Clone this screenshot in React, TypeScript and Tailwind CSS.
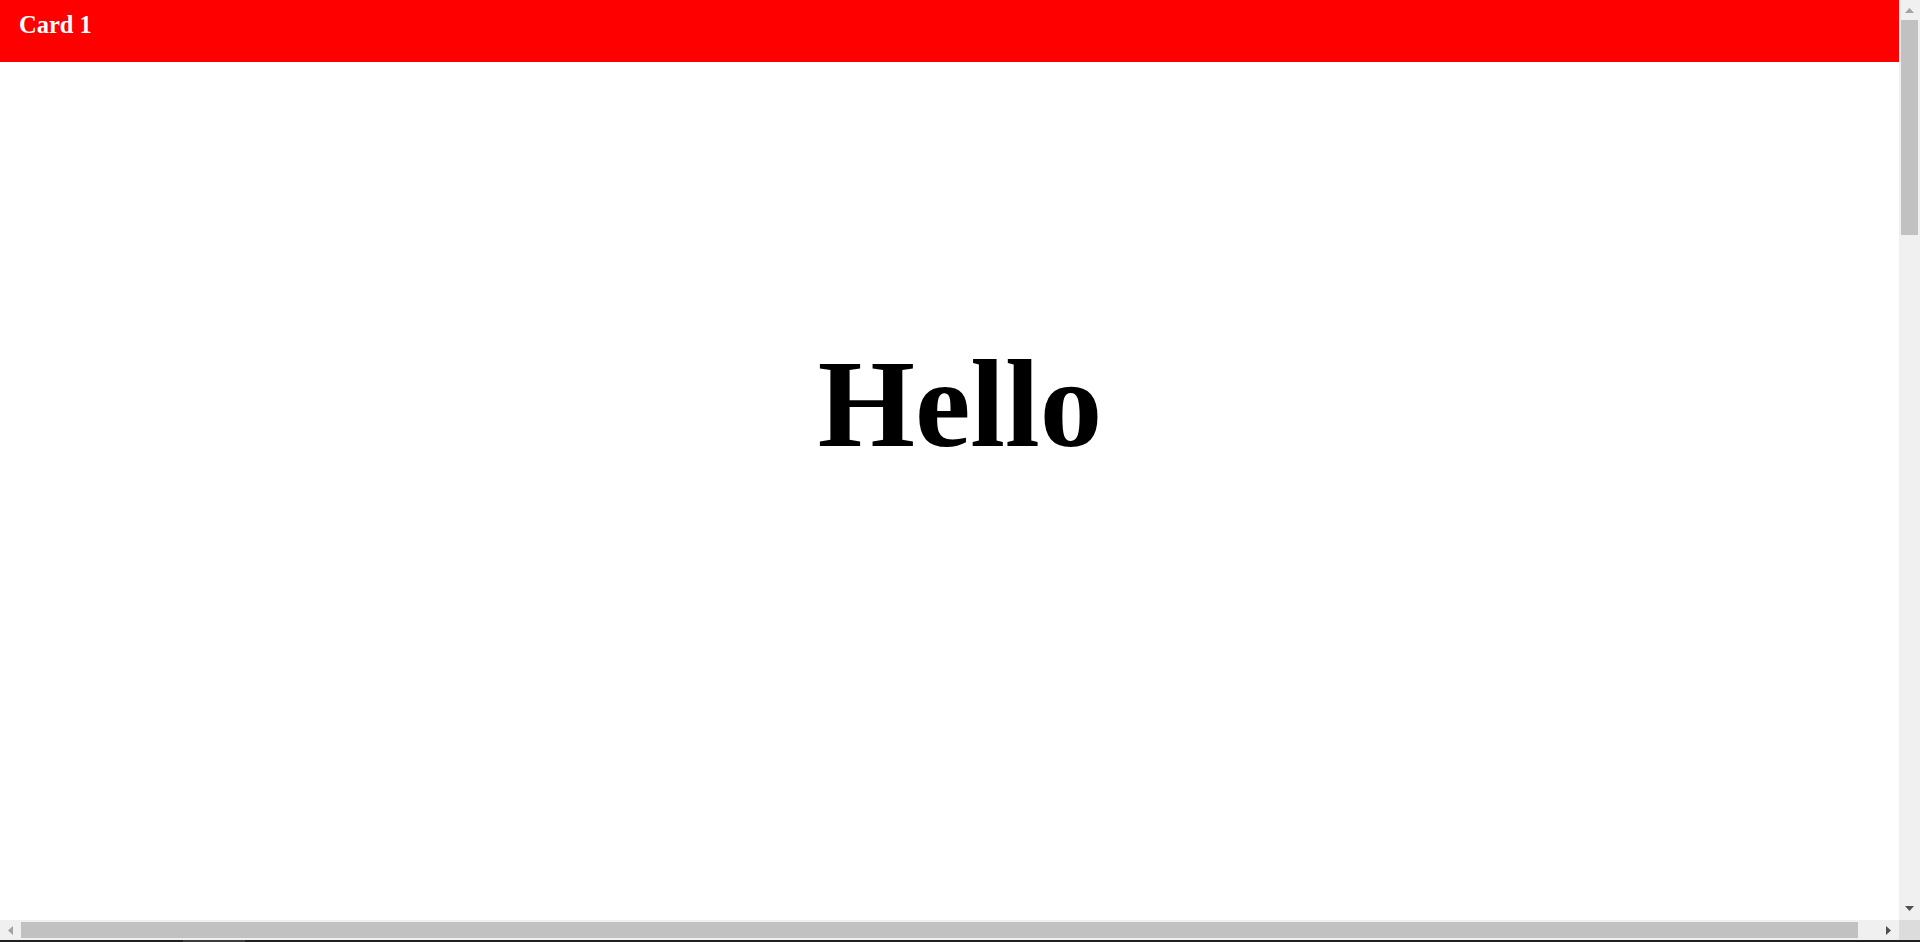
function Card({ n }: { n: number }) {
  return (
    <section className="flex h-[958px] w-[1920px] shrink-0 flex-col bg-white">
      <header className="h-[62px] shrink-0 bg-[#ff0000] pl-[19px] pt-[13px]">
        <h2 className="text-[24.5px] font-bold leading-none text-white">Card {n}</h2>
      </header>
      <div className="flex justify-center pt-[280px]">
        <h1 className="text-[125px] font-bold leading-none text-black">Hello</h1>
      </div>
    </section>
  );
}

function Arrow({ dir, color }: { dir: 'up' | 'down' | 'left' | 'right'; color: string }) {
  const pts = {
    up: '0,5 4.5,0 9,5',
    down: '0,0 9,0 4.5,5',
    left: '5,0 5,9 0,4.5',
    right: '0,0 5,4.5 0,9',
  }[dir];
  const vertical = dir === 'up' || dir === 'down';
  return (
    <svg width={vertical ? 9 : 5} height={vertical ? 5 : 9} viewBox={vertical ? '0 0 9 5' : '0 0 5 9'}>
      <polygon points={pts} fill={color} />
    </svg>
  );
}

export default function App() {
  return (
    <div className="flex h-screen w-screen flex-col overflow-hidden bg-white font-['Liberation_Serif',serif]">
      <div className="flex min-h-0 flex-1">
        <main className="flex min-w-0 flex-1 flex-col overflow-hidden">
          <Card n={1} />
        </main>
        {/* vertical scrollbar */}
        <div className="flex w-[21px] shrink-0 flex-col bg-[#f0f0f0]">
          <div className="flex h-[20px] shrink-0 items-start justify-center pt-[8px]">
            <Arrow dir="up" color="#a3a3a3" />
          </div>
          <div className="mx-[2px] h-[215px] shrink-0 bg-[#c1c1c1]" />
          <div className="flex-1" />
          <div className="flex h-[20px] shrink-0 items-start justify-center pt-[6px]">
            <Arrow dir="down" color="#505050" />
          </div>
        </div>
      </div>
      {/* horizontal scrollbar */}
      <div className="flex h-[20px] shrink-0">
        <div className="flex flex-1 items-center bg-[#f0f0f0]">
          <div className="flex h-full w-[21px] shrink-0 items-center justify-start pl-[8px]">
            <Arrow dir="left" color="#a3a3a3" />
          </div>
          <div className="h-[16px] w-[1837px] shrink-0 bg-[#c1c1c1]" />
          <div className="flex h-full flex-1 items-center justify-end pr-[8px]">
            <Arrow dir="right" color="#505050" />
          </div>
        </div>
        <div className="w-[21px] shrink-0 bg-[#dcdcdc]" />
      </div>
      <div className="flex h-[2px] shrink-0 bg-[#202020]">
        <div className="ml-[183px] w-[62px] bg-[#3c3c3c]" />
      </div>
    </div>
  );
}
